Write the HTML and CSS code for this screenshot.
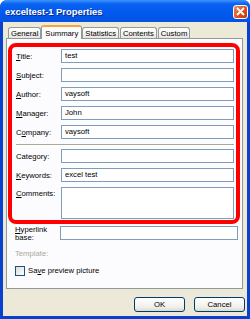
FILE: index.html
```html
<!DOCTYPE html>
<html>
<head>
<meta charset="utf-8">
<title>exceltest-1 Properties</title>
<link rel="stylesheet" href="styles.css">
</head>
<body>

<div class="window">
	<div class="titlebar">
		<span class="caption">exceltest-1 Properties</span>
		<span class="close">
			<svg width="9" height="9" viewBox="0 0 9 9"><path d="M1 1 L8 8 M8 1 L1 8" stroke="#fff" stroke-width="1.8"/></svg>
		</span>
	</div>

	<div class="client">
		<div class="tabs">
			<div class="tab">General</div>
			<div class="tab tab_on">Summary</div>
			<div class="tab">Statistics</div>
			<div class="tab">Contents</div>
			<div class="tab">Custom</div>
		</div>

		<div class="panel">
			<div class="mark">
				<div class="row"><label><u>T</u>itle:</label><div class="field">test</div></div>
				<div class="row"><label><u>S</u>ubject:</label><div class="field"></div></div>
				<div class="row"><label><u>A</u>uthor:</label><div class="field">vaysoft</div></div>
				<div class="row"><label><u>M</u>anager:</label><div class="field">John</div></div>
				<div class="row"><label>C<u>o</u>mpany:</label><div class="field">vaysoft</div></div>
				<div class="sep"></div>
				<div class="row"><label>Cate<u>g</u>ory:</label><div class="field"></div></div>
				<div class="row"><label><u>K</u>eywords:</label><div class="field">excel test</div></div>
				<div class="row row_tall"><label><u>C</u>omments:</label><div class="field field_tall"></div></div>
			</div>

			<div class="lower">
				<div class="row row_link"><label><u>H</u>yperlink<br>base:</label><div class="field"></div></div>
				<div class="row row_tpl"><label class="off">Template:</label></div>
				<div class="check"><span class="box"></span><span>Sa<u>v</u>e preview picture</span></div>
			</div>
		</div>

		<div class="buttons">
			<div class="btn">OK</div>
			<div class="btn">Cancel</div>
		</div>
	</div>
</div>

</body>
</html>
```

FILE: styles.css
```css
html, body {
	margin: 0;
	padding: 0;
	background: #fff;
}
.window {
	width: 250px;
	height: 319px;
	box-sizing: border-box;
	background: #ece9d8;
	border-left: 3px solid #0841d0;
	border-right: 3px solid #0841d0;
	border-bottom: 3px solid #0841d0;
	border-radius: 7px 7px 0 0;
	font-family: "Liberation Sans", Arial, sans-serif;
	font-size: 7.7px;
	color: #000;
	display: flex;
	flex-direction: column;
}
.titlebar {
	height: 22px;
	margin: 0 -3px;
	background: linear-gradient(#3d95ff 0%, #0a62f0 18%, #0058ee 60%, #0553e0 100%);
	display: flex;
	align-items: center;
	justify-content: space-between;
	padding: 0 2px 0 5px;
	border-radius: 7px 7px 0 0;
}
.caption {
	color: #fff;
	font-weight: bold;
	font-size: 9.4px;
	text-shadow: 1px 1px 0 #0a2a8a;
}
.close {
	width: 15px;
	height: 14px;
	box-sizing: border-box;
	border: 1px solid #fff;
	border-radius: 3px;
	background: linear-gradient(135deg, #f08a5e, #e04a1c 60%, #c63a10);
	display: flex;
	align-items: center;
	justify-content: center;
	margin-top: 1px;
}
.client {
	flex: 1;
	display: flex;
	flex-direction: column;
}
.tabs {
	display: flex;
	align-items: flex-end;
	height: 13px;
	margin: 3px 0 0 5px;
	position: relative;
	z-index: 1;
}
.tab {
	height: 11px;
	box-sizing: border-box;
	padding: 0 2px;
	border: 1px solid #919b9c;
	border-bottom: none;
	border-radius: 3px 3px 0 0;
	background: linear-gradient(#fff, #f3f3ef 60%, #e4e3dd);
	display: flex;
	align-items: center;
	margin-right: 1px;
	line-height: 9px;
}
.tab_on {
	height: 14px;
	margin-bottom: -1px;
	margin-left: -1px;
	margin-right: 0;
	padding: 0 3px;
	background: #fcfcfe;
	border-top: 2px solid #f4a53c;
}
.panel {
	height: 251px;
	box-sizing: border-box;
	margin-left: 3px;
	width: 237px;
	border: 1px solid #919b9c;
	background: #fcfcfe;
}
.mark {
	margin: 4px 2px 0 1px;
	border: 4px solid #f00;
	border-radius: 8px;
	padding: 2px 2px 1px 4px;
}
.row {
	display: flex;
	align-items: center;
	height: 14px;
	margin-bottom: 5px;
}
.row label {
	width: 45px;
	flex: none;
}
.field {
	flex: 1;
	height: 14px;
	box-sizing: border-box;
	border: 1px solid #7f9db9;
	background: #fff;
	padding: 0 3px;
	line-height: 12px;
}
.sep {
	margin: 2px 0 3px;
	border-top: 1px solid #aca899;
	border-bottom: 1px solid #fff;
}
.row_tall {
	height: 32px;
	margin-bottom: 0;
	align-items: flex-start;
}
.row_tall label {
	padding-top: 2px;
}
.field_tall {
	height: 32px;
}
.lower {
	padding: 2px 2px 0 8px;
}
.row_link {
	height: 16px;
	align-items: flex-start;
	margin-bottom: 0;
}
.row_link label {
	line-height: 8px;
}
.row_link .field {
	margin-right: 2px;
}
.row_tpl {
	margin-top: 4px;
	height: 14px;
}
.off {
	color: #aca899;
}
.check {
	display: flex;
	align-items: center;
	margin-top: 3px;
	height: 11px;
}
.box {
	width: 10px;
	height: 10px;
	box-sizing: border-box;
	border: 1px solid #1c5180;
	background: linear-gradient(135deg, #dcdcd6, #fff);
	margin-right: 3px;
}
.buttons {
	display: flex;
	justify-content: flex-end;
	margin: 8px 2px 0 0;
}
.btn {
	width: 51px;
	height: 15px;
	box-sizing: border-box;
	border: 1px solid #003c74;
	border-radius: 3px;
	background: linear-gradient(#fff, #f0f0ea 70%, #dcdad0);
	display: flex;
	align-items: center;
	justify-content: center;
	margin-left: 9px;
}
```
